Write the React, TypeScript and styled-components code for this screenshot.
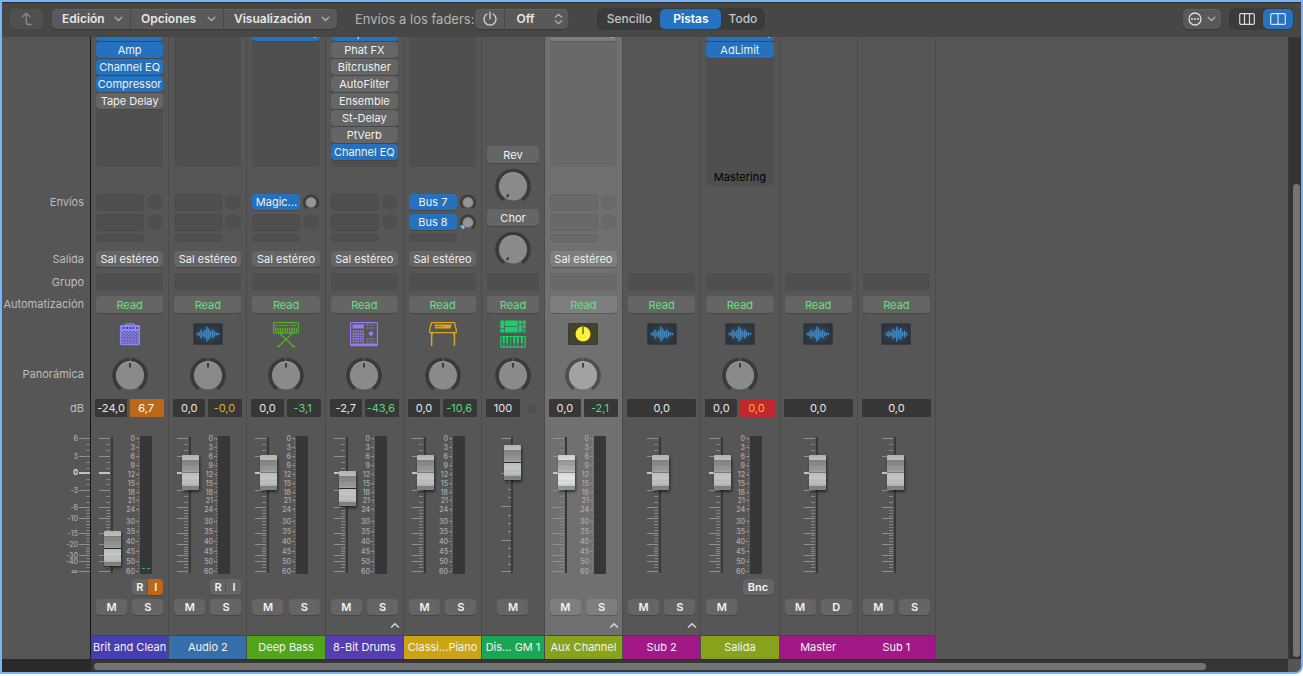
import React from 'react';
import styled, { createGlobalStyle, css } from 'styled-components';

const GlobalStyle = createGlobalStyle`
  * { box-sizing: border-box; }
  body {
    margin: 0;
    background: #fff;
    font-family: Inter, 'Liberation Sans', sans-serif;
    font-size: 11px;
    color: #e6e6e6;
    -webkit-font-smoothing: antialiased;
  }
  button, input, select { font: inherit; color: inherit; margin: 0; }
`;

/* ---------- window and toolbar ---------- */

const Window = styled.div`
  border: 2px solid #78b4fa;
  border-radius: 0 0 8px 0;
  background: #565656;
  overflow: hidden;
`;

const Toolbar = styled.header`
  display: flex;
  align-items: center;
  height: 35px;
  padding: 0 7px 2px 8px;
  background: #474746;
  border-top: 1px solid #2c2c2c;
`;

const raised = css`
  background: #595959;
  box-shadow: 0 1px 1px #3a3a3a, inset 0 1px 0 #626262;
`;

const UpButton = styled.button`
  display: flex;
  align-items: center;
  justify-content: center;
  width: 33px;
  height: 20px;
  padding: 0;
  border: 0;
  border-radius: 5px;
  background: #505050;
  color: #8a8a8a;
`;

const MenuGroup = styled.div`
  display: flex;
  height: 20px;
  margin-left: 9px;
  border-radius: 5px;
  overflow: hidden;
  ${raised}
`;

const MenuButton = styled.button<{ $width: number }>`
  display: flex;
  align-items: center;
  justify-content: space-between;
  width: ${p => p.$width}px;
  padding: 0 7px 0 10px;
  border: 0;
  border-right: 1px solid #484848;
  background: transparent;
  font-size: 12px;
  line-height: 20px;
  font-weight: 600;
  white-space: nowrap;
  &:last-child { border-right: 0; }
`;

const FaderLabel = styled.label`
  margin: 0 1px 0 18px;
  font-size: 13px;
  line-height: 20px;
  color: #b4b4b4;
  white-space: nowrap;
`;

const SendGroup = styled.div`
  display: flex;
  height: 20px;
  border-radius: 5px;
  overflow: hidden;
  ${raised}
`;

const PowerButton = styled.button`
  display: flex;
  align-items: center;
  justify-content: center;
  width: 30px;
  padding: 0;
  border: 0;
  border-right: 1px solid #484848;
  background: transparent;
`;

const SelectBox = styled.span`
  position: relative;
  display: flex;
  width: 63px;
  svg {
    position: absolute;
    right: 5px;
    top: 4px;
    pointer-events: none;
  }
`;

const Select = styled.select`
  width: 100%;
  padding: 0 0 0 11px;
  border: 0;
  appearance: none;
  background: transparent;
  font-size: 12px;
  line-height: 20px;
  font-weight: 600;
`;

const Segments = styled.div`
  display: flex;
  height: 22px;
  padding: 1px;
  margin-left: 29px;
  border-radius: 6px;
  background: #3b3b3b;
`;

const Segment = styled.button<{ $on?: boolean; $width: number }>`
  display: flex;
  align-items: center;
  justify-content: center;
  width: ${p => p.$width}px;
  padding: 0;
  border: 0;
  border-radius: 5px;
  background: ${p => (p.$on ? '#2671c0' : 'transparent')};
  color: ${p => (p.$on ? '#fff' : '#c4c4c4')};
  font-size: 12px;
  line-height: 20px;
  font-weight: ${p => (p.$on ? 600 : 500)};
`;

const ToolbarEnd = styled.div`
  display: flex;
  align-items: center;
  margin-left: auto;
  ${Segments} { margin-left: 8px; }
`;

const ActionButton = styled.button`
  display: flex;
  align-items: center;
  justify-content: center;
  gap: 5px;
  width: 38px;
  height: 20px;
  padding: 0;
  border: 0;
  border-radius: 5px;
  ${raised}
`;

/* ---------- mixer ---------- */

const MixerRow = styled.main`
  display: flex;
`;

const LabelColumn = styled.div`
  width: 89px;
  flex: none;
  display: flex;
  flex-direction: column;
  align-items: flex-end;
  padding-top: 157px;
  border-right: 1px solid #161616;
  color: #bdbdbd;
`;

const RowLabel = styled.span<{ $height: number; $after: number }>`
  height: ${p => p.$height}px;
  line-height: ${p => p.$height}px;
  margin: 0 6px ${p => p.$after}px 0;
  white-space: nowrap;
`;

const Strips = styled.div`
  display: grid;
  grid-template-columns: repeat(5, 5fr) 4fr repeat(5, 5fr);
  width: 845px;
  flex: none;
`;

const StripBox = styled.section<{ $selected?: boolean }>`
  --slot: ${p => (p.$selected ? '#696969' : '#4f4f4f')};
  --button: ${p => (p.$selected ? '#7e7e7e' : '#656565')};
  --edge: ${p => (p.$selected ? '#5a5a5a' : '#474747')};
  --ring: ${p => (p.$selected ? '#4e4e4e' : '#3a3a3a')};
  --cap: ${p => (p.$selected ? '#a2a2a2' : '#8a8a8a')};
  display: flex;
  flex-direction: column;
  min-width: 0;
  border-right: 1px solid #4b4b4b;
  background: ${p => (p.$selected ? '#707070' : '#565656')};
`;

const TopArea = styled.div`
  display: flex;
  flex-direction: column;
  height: 236px;
  padding: 0 5px;
`;

const Inserts = styled.div<{ $tall?: boolean }>`
  display: flex;
  flex-direction: column;
  flex: none;
  height: ${p => (p.$tall ? 149 : 130)}px;
  border-radius: 0 0 4px 4px;
  overflow: hidden;
  background: var(--slot);
`;

const InsertList = styled.div`
  display: flex;
  flex-direction: column;
  gap: 1px;
  margin-top: -12px;
`;

const SlotButton = styled.button<{ $on?: boolean; $green?: boolean; $height?: number }>`
  display: block;
  width: 100%;
  flex: none;
  height: ${p => p.$height ?? 16}px;
  padding: 0;
  border: 0;
  border-radius: 4px;
  background: ${p => (p.$on ? '#2671bd' : 'var(--button)')};
  box-shadow: 0 1px 0 var(--edge);
  color: ${p => (p.$green ? '#67e07e' : '#f0f0f0')};
  line-height: 16px;
  text-align: center;
  white-space: nowrap;
  overflow: hidden;
`;

const MasteringNote = styled.div`
  margin-top: auto;
  line-height: 18px;
  text-align: center;
  color: #000;
`;

const Sends = styled.div`
  display: grid;
  grid-template-columns: 48px 16px;
  grid-template-rows: 17px 17px 8px;
  gap: 3px;
  margin-top: 27px;
  margin-bottom: 9px;
`;

const EmptySend = styled.span`
  border-radius: 4px;
  background: var(--slot);
  box-shadow: inset 0 0 0 1px rgba(0, 0, 0, 0.04);
`;

const EmptyKnob = styled.span<{ $size?: number }>`
  width: ${p => p.$size ?? 16}px;
  height: ${p => p.$size ?? 16}px;
  border-radius: 50%;
  background: var(--slot);
`;

const SmartControls = styled.div`
  display: flex;
  flex-direction: column;
  align-items: center;
  gap: 5px;
  padding-top: 109px;
`;

const Group = styled.div`
  height: 18px;
  margin: 0 5px 5px;
  border-radius: 2px;
  background: var(--slot);
`;

const AutomationRow = styled.div`
  padding: 0 5px;
`;

const IconArea = styled.div`
  display: flex;
  align-items: center;
  justify-content: center;
  height: 44px;
  padding-bottom: 2px;
`;

const PanArea = styled.div`
  display: flex;
  justify-content: center;
  height: 36px;
  margin-bottom: 6px;
`;

const KnobBox = styled.label`
  position: relative;
  display: flex;
  flex: none;
  input {
    position: absolute;
    inset: 0;
    width: 100%;
    height: 100%;
    opacity: 0;
  }
`;

const LevelRow = styled.div`
  display: flex;
  align-items: center;
  gap: 3px;
  height: 18px;
  margin: 0 4px 19px;
`;

const LevelInput = styled.input`
  flex: 1 1 0;
  min-width: 0;
  height: 18px;
  padding: 0;
  border: 0;
  border-radius: 1px;
  background: #373737;
  text-align: center;
`;

const tones = {
  green: ['#373737', '#57d977'],
  yellow: ['#373737', '#d9b32b'],
  orange: ['#bd6818', '#ffffff'],
  red: ['#c1272d', '#ffb629'],
};

const PeakButton = styled.button<{ $tone: keyof typeof tones }>`
  flex: 1 1 0;
  min-width: 0;
  height: 18px;
  padding: 0 2px 0 0;
  border: 0;
  border-radius: 1px;
  background: ${p => tones[p.$tone][0]};
  color: ${p => tones[p.$tone][1]};
  text-align: center;
  white-space: nowrap;
`;

const ClipDot = styled.span`
  display: flex;
  justify-content: center;
  width: 17px;
`;

const FaderArea = styled.div<{ $shift: number }>`
  position: relative;
  height: 138px;
  margin-bottom: 5px;
  padding-left: ${p => p.$shift}px;
`;

const Fader = styled.input<{ $shift: number; $selected?: boolean; $zero?: boolean }>`
  position: absolute;
  left: ${p => p.$shift + 13}px;
  top: -15px;
  width: 17px;
  height: 169px;
  padding: 0;
  appearance: none;
  background: transparent;
  writing-mode: vertical-lr;
  direction: rtl;
  &::-webkit-slider-runnable-track { background: transparent; width: 17px; }
  &::-webkit-slider-thumb {
    appearance: none;
    width: 17px;
    height: 35px;
    border-radius: 1px;
    box-shadow: 1px 2px 3px rgba(0, 0, 0, 0.55);
    filter: ${p => (p.$selected ? 'brightness(1.15)' : 'none')};
    background: linear-gradient(
      to bottom,
      #b2b2b2 0, #bdbdbd 5px,
      #7b7b7b 5px, #8a8a8a 8px, #848484 9px, #959595 12px, #8e8e8e 13px, #a2a2a2 17px,
      ${p => (p.$zero ? '#7a7a7a' : '#2b2b2b')} 17px, ${p => (p.$zero ? '#7a7a7a' : '#2b2b2b')} 18px,
      #b8bcbc 18px, #c2c8c8 24px, #b4b9b9 25px, #bcc2c2 28px, #a8acac 31px,
      #7c7c7c 31px, #858585 35px
    );
  }
`;

const RecordRow = styled.div`
  display: flex;
  justify-content: flex-end;
  gap: 1px;
  height: 16px;
  margin: 0 5px 4px;
`;

const MuteRow = styled.div<{ $center?: boolean }>`
  display: flex;
  justify-content: ${p => (p.$center ? 'center' : 'space-between')};
  height: 16px;
  margin: 0 5px;
`;

const SmallButton = styled.button<{ $half?: 'left' | 'right'; $armed?: boolean }>`
  width: ${p => (p.$half ? 15 : 31)}px;
  height: 16px;
  padding: 0;
  border: 0;
  border-radius: ${p => (p.$half === 'left' ? '4px 0 0 4px' : p.$half === 'right' ? '0 4px 4px 0' : '4px')};
  background: ${p => (p.$armed ? '#bd6818' : 'var(--button)')};
  box-shadow: 0 1px 0 var(--edge);
  color: #f2f2f2;
  font-size: 11px;
  line-height: 16px;
  font-weight: 600;
`;

const StackRow = styled.div`
  display: flex;
  justify-content: flex-end;
  align-items: center;
  height: 20px;
  padding-right: 3px;
`;

const NameLabel = styled.div<{ $color: string }>`
  height: 24px;
  border-top: 1px solid #444;
  background: ${p => p.$color};
  color: #f4f4f4;
  line-height: 22px;
  text-align: center;
  white-space: nowrap;
`;

const Spacer = styled.div`
  flex: 1;
`;

const VerticalScroll = styled.div`
  display: flex;
  width: 13px;
  padding: 147px 1px 2px 4px;
  background: #343434;
  border-left: 1px solid #3a3a3a;
`;

const Thumb = styled.span`
  flex: 1;
  border-radius: 4px;
  background: #747474;
`;

const BottomBar = styled.footer`
  display: flex;
  height: 13px;
`;

const BottomCorner = styled.div<{ $width: number; $color: string }>`
  width: ${p => p.$width}px;
  background: ${p => p.$color};
`;

const HorizontalScroll = styled.div`
  flex: 1;
  display: flex;
  padding: 3px 82px 2px 3px;
  background: #363636;
  border-top: 1px solid #2c2c2c;
`;

/* ---------- drawings ---------- */

const Chevron = () => (
  <svg width="9" height="6" viewBox="0 0 9 6" fill="none" stroke="#a8a8a8" strokeWidth="1.5" strokeLinecap="round" strokeLinejoin="round">
    <path d="M1.2 1.2 4.5 4.5 7.8 1.2" />
  </svg>
);

const Wave = ({ bars }: { bars: number[] }) => (
  <svg width="30" height="22" viewBox="0 0 30 22">
    <defs>
      <radialGradient id="waveBg">
        <stop offset="0" stopColor="#384c61" />
        <stop offset="1" stopColor="#2b343e" />
      </radialGradient>
    </defs>
    <rect x="0.5" y="0.5" width="29" height="21" rx="1" fill="url(#waveBg)" stroke="#383c40" />
    {bars.map((h, i) => (
      <rect key={i} x={3.5 + i * 1.95} y={11 - h / 2} width="1.3" height={h} rx="0.6" fill="#4593d2" />
    ))}
  </svg>
);

const Amp = () => (
  <svg width="22" height="23" viewBox="0 0 22 23" fill="none" stroke="#8d86f8">
    <defs>
      <pattern id="grille" width="3" height="3" patternUnits="userSpaceOnUse">
        <rect width="3" height="3" fill="#8d86f8" stroke="none" />
        <circle cx="0.8" cy="0.8" r="0.75" fill="#4d4b6b" stroke="none" />
        <circle cx="2.3" cy="2.3" r="0.75" fill="#4d4b6b" stroke="none" />
      </pattern>
    </defs>
    <path d="M6 2.5C6.5 1.2 7 .8 8 .8h6c1 0 1.5.4 2 1.7" strokeWidth="1.3" />
    <rect x="1" y="2" width="20" height="6" rx="1" fill="#8d86f8" stroke="none" />
    <g fill="#3f3d66" stroke="none">
      <circle cx="4.5" cy="5" r="1" /><circle cx="8" cy="5" r="1" /><circle cx="11" cy="5" r="1" />
      <circle cx="14" cy="5" r="1" /><circle cx="18" cy="5" r="1" />
    </g>
    <rect x="1.6" y="7.6" width="18.8" height="14" rx="1" fill="url(#grille)" strokeWidth="1.3" />
  </svg>
);

const Synth = () => (
  <svg width="26" height="27" viewBox="0 0 26 27" fill="none" stroke="#55b02a">
    <rect x="0.6" y="1.6" width="24.8" height="10.2" rx="0.5" strokeWidth="1.2" />
    <path d="M2 4.5h3M6 4.5h9M17 4.5h7" strokeWidth="1.6" strokeDasharray="1.6 0.7" />
    <path d="M2 8.8h22" strokeWidth="4" strokeDasharray="1.4 0.9" />
    <path d="M5 11.8h4M17 11.8h4" strokeWidth="1.6" />
    <path d="M7 12.5 20.5 25.5M19 12.5 5.5 25.5" strokeWidth="1.2" />
    <path d="M4 26.2 7 24.5M22 26.2 19 24.5" strokeWidth="1.4" />
  </svg>
);

const DrumMachine = () => (
  <svg width="28" height="25" viewBox="0 0 28 25" fill="none" stroke="#9a78f2">
    <rect x="0.6" y="0.6" width="26.8" height="23" rx="0.8" strokeWidth="1.2" />
    <path d="M.6 22.7h26.800" strokeWidth="2.4" />
    <rect x="2.5" y="2.5" width="11.5" height="4" fill="#9a78f2" stroke="none" />
    <path d="M2.5 9.3h11.500M2.500 11.800h11.500M2.500 14.300h11.500M2.500 16.800h11.500M2.500 19.300h11.500" strokeWidth="1.8" strokeDasharray="1.8 0.6" />
    <path d="M16.5 3h9M16.5 6h9M16.5 17h9M16.5 19.800h9" strokeWidth="1" strokeDasharray="1.5 0.8" />
    <circle cx="21" cy="11.5" r="2.2" fill="#9a78f2" stroke="none" />
  </svg>
);

const ElectricPiano = () => (
  <svg width="28" height="25" viewBox="0 0 28 25" fill="none" stroke="#d9a51a">
    <path d="M2.5.7h23L27.3 8v2.600H.7V8z" strokeWidth="1.3" strokeLinejoin="round" />
    <path d="M5.5 2.5h17l-.8 4H6.300z" fill="#d9a51a" stroke="none" />
    <path d="M7.5 4.5h1.200M9.500 4.500h1.200M12 4.500h1.200" stroke="#5a4a1c" />
    <path d="M2.6 11v13M25.4 11v13" strokeWidth="1.5" />
    <path d="M3.5 10.8c0 1.500-.3 2.200-.9 3M24.500 10.800c0 1.500.3 2.200.9 3" />
  </svg>
);

const SoundModule = () => (
  <svg width="26" height="28" viewBox="0 0 26 28" fill="none" stroke="#17cf6b">
    <g fill="#17cf6b" stroke="none">
      <rect x="0.3" y="0.5" width="4" height="8" /><rect x="5" y="0.5" width="12.8" height="5.5" />
      <rect x="5" y="6.8" width="12.8" height="5.7" /><rect x="0.3" y="9.2" width="4" height="3.3" />
      <rect x="18.6" y="0.5" width="3.3" height="3.5" /><rect x="22.6" y="0.5" width="3.1" height="3.5" />
      <rect x="18.6" y="4.7" width="3.3" height="7.8" /><rect x="22.6" y="4.7" width="3.1" height="3.5" />
      <rect x="22.6" y="9" width="3.1" height="1.4" /><rect x="22.6" y="11.2" width="3.1" height="1.3" />
    </g>
    <rect x="0.8" y="16.5" width="24.4" height="10.7" rx="0.5" strokeWidth="1.2" />
    <path d="M3.8 17v10M7.2 17v10M10.7 17v10M14.2 17v10M17.7 17v10M21.8 17v10" strokeWidth="0.9" />
    <path d="M3.8 17v6M7.2 17v6M14.2 17v6M17.7 17v6M21.8 17v6" strokeWidth="1.9" />
  </svg>
);

const AuxKnob = () => (
  <svg width="30" height="22" viewBox="0 0 30 22">
    <rect x="0.5" y="0.5" width="29" height="21" rx="1" fill="#45432c" stroke="#3c3b30" />
    <circle cx="15" cy="11" r="7.5" fill="#fbf13c" />
    <path d="M15 4v7" stroke="#4a4720" strokeWidth="1.2" />
  </svg>
);

const WAVE_WIDE = [2, 4, 9, 5, 8, 15, 11, 6, 9, 5, 3, 2];
const WAVE_FINE = [1, 4, 6, 4, 10, 7, 15, 9, 12, 5, 7, 3];

function StripIcon({ kind }: { kind: string }) {
  switch (kind) {
    case 'amp': return <Amp />;
    case 'synth': return <Synth />;
    case 'drums': return <DrumMachine />;
    case 'piano': return <ElectricPiano />;
    case 'module': return <SoundModule />;
    case 'aux': return <AuxKnob />;
    case 'waveFine': return <Wave bars={WAVE_FINE} />;
    default: return <Wave bars={WAVE_WIDE} />;
  }
}

function Knob({ label, low }: { label: string; low?: boolean }) {
  return (
    <KnobBox>
      <svg width="36" height="36" viewBox="0 0 36 36" fill="none">
        <path d="M8.9 31.7A16 16 0 1 1 27.1 31.7" stroke="var(--ring)" strokeWidth="3.6" />
        {!low && <path d="M18 1v5" stroke="#3f8a4d" />}
        <circle cx="18" cy="18.5" r="14" fill="var(--cap)" />
        <path d="M7.5 9.5A13.5 13.5 0 0 1 28.5 9.5" stroke="rgba(255,255,255,.35)" strokeWidth="0.8" />
        {low
          ? <path d="M13.5 26.5 11.8 29" stroke="#222" strokeWidth="1.5" />
          : <path d="M18 6v4.5" stroke="#222" strokeWidth="1.5" />}
      </svg>
      <input type="range" min="-64" max="63" defaultValue={low ? -64 : 0} aria-label={label} />
    </KnobBox>
  );
}

function SendKnob({ label, low }: { label: string; low?: boolean }) {
  return (
    <KnobBox>
      <svg width="16" height="17" viewBox="0 0 16 17" fill="none">
        <path d="M4 14.3A7 7 0 1 1 12 14.3" stroke="#3a3a3a" strokeWidth="2" />
        {low && <path d="M1.3 11.5 4.2 14.3" stroke="#7cb9ff" strokeWidth="3" />}
        <circle cx="8" cy="8.5" r="5" fill="#959595" />
      </svg>
      <input type="range" min="0" max="127" defaultValue={low ? 0 : 90} aria-label={label} />
    </KnobBox>
  );
}

const MAJOR = [2, 20, 54, 71, 82, 97, 108, 119, 125, 135];
const MINOR = [8, 14, 26, 32, 43, 48, 60, 66, 74, 77, 80, 85, 88, 91, 94, 99, 102, 105, 111, 113, 115, 117, 122, 128, 131];

function FaderTicks({ x, end, minor }: { x: number; end: number; minor: number }) {
  return (
    <g shapeRendering="crispEdges" stroke="#909090">
      {MAJOR.map(y => <path key={y} d={`M${x} ${y + 0.5}H${end}`} />)}
      {MINOR.map(y => <path key={y} d={`M${minor} ${y + 0.5}H${end}`} stroke="#858585" />)}
      <path d={`M${x} 37H${end}`} stroke="#c4c4c4" strokeWidth="2" />
    </g>
  );
}

const METER_SCALE: [string, number][] = [
  ['0', 2], ['3', 11], ['6', 20], ['9', 29], ['12', 38], ['15', 47], ['18', 56], ['21', 64],
  ['24', 73], ['30', 85], ['35', 95], ['40', 105], ['45', 115], ['50', 125], ['60', 135],
];

const ScaleSvg = styled.svg`
  display: block;
  overflow: visible;
`;

const ScaleText = styled.text`
  font-size: 7px;
  font-weight: 500;
  fill: #acacac;
  text-anchor: end;
`;

function FaderScale({ meter, level }: { meter?: boolean; level?: boolean }) {
  return (
    <ScaleSvg width="62" height="138" viewBox="0 0 62 138">
      <FaderTicks x={8} end={19} minor={15} />
      <rect x="20" y="1" width="2" height="136" fill="#383838" />
      {meter && (
        <>
          {METER_SCALE.map(([t, y]) => <ScaleText key={t} x="44" y={y + 3}>{t}</ScaleText>)}
          {METER_SCALE.map(([t, y]) => <path key={t} d={`M45 ${y + 0.5}h3`} stroke="#8e8e8e" shapeRendering="crispEdges" />)}
          <path d="M47.5 2.5v133" stroke="#8a8a8a" strokeDasharray="1 2" shapeRendering="crispEdges" />
          <rect x="49" y="0" width="12" height="138" rx="1" fill="#373737" />
          {level && <path d="M51 132.5h3M56 132.5h3" stroke="#3fae55" strokeWidth="1" />}
        </>
      )}
    </ScaleSvg>
  );
}

function MidiScale() {
  const majors = [2, 37, 70, 104, 135];
  const minors = [10, 19, 28, 45, 53, 61, 79, 87, 95, 112, 120, 128];
  return (
    <ScaleSvg width="50" height="138" viewBox="0 0 50 138">
      <g shapeRendering="crispEdges" stroke="#909090">
        {majors.map(y => <path key={y} d={`M8 ${y + 0.5}h11`} />)}
        {minors.map(y => <path key={y} d={`M15 ${y + 0.5}h4`} />)}
      </g>
      <rect x="18" y="1" width="2" height="136" fill="#383838" />
    </ScaleSvg>
  );
}

const RULER: [string, number][] = [
  ['6', 2], ['3', 20], ['-3', 54], ['-6', 71], ['-10', 82], ['-15', 97], ['-20', 108], ['-30', 119], ['-40', 125], ['∞', 135],
];

const ZeroText = styled(ScaleText)`
  fill: #e2e2e2;
  font-weight: 700;
`;

const Ruler = () => (
  <ScaleSvg width="88" height="138" viewBox="0 0 88 138">
    {RULER.map(([t, y]) => <ScaleText key={t} x="76" y={y + 3}>{t}</ScaleText>)}
    <ZeroText x="76" y="39">0</ZeroText>
    <FaderTicks x={77} end={88} minor={84} />
  </ScaleSvg>
);

/* ---------- data ---------- */

type Insert = [name: string, on: boolean];

interface Strip {
  name: string;
  color: string;
  icon: string;
  inserts?: Insert[];
  mastering?: boolean;
  sends?: string[];
  lowSend?: number;
  midi?: boolean;
  selected?: boolean;
  pan?: boolean;
  level: string;
  peak?: string;
  tone?: keyof typeof tones;
  fader: number;
  record?: 'armed' | 'idle';
  bounce?: boolean;
  buttons: string[];
  stack?: boolean;
}

const STRIPS: Strip[] = [
  { name: 'Brit and Clean', color: '#463fb3', icon: 'amp', inserts: [['Noise Gate', true], ['Amp', true], ['Channel EQ', true], ['Compressor', true], ['Tape Delay', false]], sends: [], pan: true, level: '-24,0', peak: '6,7', tone: 'orange', fader: 24, record: 'armed', buttons: ['M', 'S'] },
  { name: 'Audio 2', color: '#376fab', icon: 'wave', inserts: [], sends: [], pan: true, level: '0,0', peak: '-0,0', tone: 'yellow', fader: 100, record: 'idle', buttons: ['M', 'S'] },
  { name: 'Deep Bass', color: '#52a41b', icon: 'synth', inserts: [['Channel EQ', true]], sends: ['Magic...'], pan: true, level: '0,0', peak: '-3,1', tone: 'green', fader: 100, buttons: ['M', 'S'] },
  { name: '8-Bit Drums', color: '#563eb1', icon: 'drums', inserts: [['Compressor', true], ['Phat FX', false], ['Bitcrusher', false], ['AutoFilter', false], ['Ensemble', false], ['St-Delay', false], ['PtVerb', false], ['Channel EQ', true]], sends: [], pan: true, level: '-2,7', peak: '-43,6', tone: 'green', fader: 84, buttons: ['M', 'S'], stack: true },
  { name: 'Classi...Piano', color: '#caa414', icon: 'piano', inserts: [], sends: ['Bus 7', 'Bus 8'], lowSend: 1, pan: true, level: '0,0', peak: '-10,6', tone: 'green', fader: 100, buttons: ['M', 'S'] },
  { name: 'Dis... GM 1', color: '#1ba656', icon: 'module', midi: true, pan: true, level: '100', fader: 110, buttons: ['M'] },
  { name: 'Aux Channel', color: '#88a31b', icon: 'aux', inserts: [['Channel EQ', false]], sends: [], selected: true, pan: true, level: '0,0', peak: '-2,1', tone: 'green', fader: 100, buttons: ['M', 'S'], stack: true },
  { name: 'Sub 2', color: '#a31887', icon: 'wave', level: '0,0', fader: 100, buttons: ['M', 'S'], stack: true },
  { name: 'Salida', color: '#88a31b', icon: 'wave', inserts: [['Channel EQ', true], ['AdLimit', true]], mastering: true, pan: true, level: '0,0', peak: '0,0', tone: 'red', fader: 100, bounce: true, buttons: ['M'] },
  { name: 'Master', color: '#a31887', icon: 'wave', level: '0,0', fader: 100, buttons: ['M', 'D'] },
  { name: 'Sub 1', color: '#a31887', icon: 'waveFine', level: '0,0', fader: 100, buttons: ['M', 'S'] },
];

function SendRows({ strip }: { strip: Strip }) {
  return (
    <Sends>
      {[0, 1].map(i => {
        const bus = strip.sends?.[i];
        return (
          <React.Fragment key={i}>
            {bus ? <SlotButton $on>{bus}</SlotButton> : <EmptySend />}
            {bus ? <SendKnob label={`${strip.name} ${bus}`} low={strip.lowSend === i} /> : <EmptyKnob />}
          </React.Fragment>
        );
      })}
      <EmptySend />
    </Sends>
  );
}

function ChannelStrip({ strip }: { strip: Strip }) {
  const metered = Boolean(strip.peak);
  const shift = metered ? 0 : strip.midi ? 11 : 16;
  return (
    <StripBox $selected={strip.selected} aria-label={strip.name}>
      <TopArea>
        {strip.inserts && (
          <Inserts $tall={strip.mastering}>
            <InsertList>
              {strip.inserts.map(([name, on]) => <SlotButton key={name} $on={on}>{name}</SlotButton>)}
            </InsertList>
            {strip.mastering && <MasteringNote>Mastering</MasteringNote>}
          </Inserts>
        )}
        {strip.sends && <SendRows strip={strip} />}
        {strip.sends && <SlotButton>Sal estéreo</SlotButton>}
        {strip.midi && (
          <SmartControls>
            <SlotButton $height={17}>Rev</SlotButton>
            <Knob label="Rev" low />
            <SlotButton $height={17}>Chor</SlotButton>
            <Knob label="Chor" low />
          </SmartControls>
        )}
      </TopArea>
      <Group />
      <AutomationRow><SlotButton $green $height={17}>Read</SlotButton></AutomationRow>
      <IconArea><StripIcon kind={strip.icon} /></IconArea>
      <PanArea>{strip.pan && <Knob label={`Panorámica ${strip.name}`} />}</PanArea>
      <LevelRow>
        <LevelInput defaultValue={strip.level} aria-label={`dB ${strip.name}`} />
        {strip.peak && <PeakButton $tone={strip.tone ?? 'green'}>{strip.peak}</PeakButton>}
        {strip.midi && <ClipDot><EmptyKnob $size={9} /></ClipDot>}
      </LevelRow>
      <FaderArea $shift={shift}>
        {strip.midi ? <MidiScale /> : <FaderScale meter={metered} level={strip.record === 'armed'} />}
        <Fader
          type="range"
          min="0"
          max="134"
          defaultValue={strip.fader}
          aria-label={`Fader ${strip.name}`}
          $shift={strip.midi ? shift - 2 : shift}
          $selected={strip.selected}
          $zero={strip.fader === 100}
        />
      </FaderArea>
      <RecordRow>
        {strip.record && <SmallButton $half="left">R</SmallButton>}
        {strip.record && <SmallButton $half="right" $armed={strip.record === 'armed'}>I</SmallButton>}
        {strip.bounce && <SmallButton>Bnc</SmallButton>}
      </RecordRow>
      <MuteRow $center={strip.midi}>
        {strip.buttons.map(b => <SmallButton key={b}>{b}</SmallButton>)}
      </MuteRow>
      <StackRow>
        {strip.stack && (
          <svg width="10" height="7" viewBox="0 0 10 7" fill="none" stroke="#d8d8d8" strokeWidth="1.5">
            <path d="M1.2 5.5 5 1.7 8.8 5.5" />
          </svg>
        )}
      </StackRow>
      <NameLabel $color={strip.color}>{strip.name}</NameLabel>
    </StripBox>
  );
}

export default function App() {
  return (
    <>
      <GlobalStyle />
      <Window>
        <Toolbar>
          <UpButton aria-label="Subir">
            <svg width="12" height="14" viewBox="0 0 12 14" fill="none" stroke="currentColor" strokeWidth="1.3" strokeLinecap="round" strokeLinejoin="round">
              <path d="M1.5 4.8 5.2 1.2 8.9 4.8M5.2 1.2V9.5c0 2 .8 3 2.6 3H10" />
            </svg>
          </UpButton>
          <MenuGroup>
            <MenuButton $width={79}>Edición<Chevron /></MenuButton>
            <MenuButton $width={93}>Opciones<Chevron /></MenuButton>
            <MenuButton $width={113}>Visualización<Chevron /></MenuButton>
          </MenuGroup>
          <FaderLabel htmlFor="send-mode">Envíos a los faders:</FaderLabel>
          <SendGroup>
            <PowerButton aria-label="Activar envíos a los faders">
              <svg width="16" height="16" viewBox="0 0 16 16" fill="none" stroke="#d0d0d0" strokeWidth="1.4" strokeLinecap="round">
                <path d="M8 1.3v6.4M4.900 3a6 6 0 1 0 6.200 0" />
              </svg>
            </PowerButton>
            <SelectBox>
              <Select id="send-mode" defaultValue="Off"><option>Off</option></Select>
              <svg width="9" height="12" viewBox="0 0 9 12" fill="none" stroke="#a8a8a8" strokeWidth="1.4" strokeLinecap="round" strokeLinejoin="round">
                <path d="M1.3 4.2 4.5 1.2 7.7 4.2M1.3 7.8 4.5 10.8 7.7 7.8" />
              </svg>
            </SelectBox>
          </SendGroup>
          <Segments role="group" aria-label="Vista">
            <Segment $width={62}>Sencillo</Segment>
            <Segment $width={61} $on aria-pressed>Pistas</Segment>
            <Segment $width={43}>Todo</Segment>
          </Segments>
          <ToolbarEnd>
            <ActionButton aria-label="Acciones">
              <svg width="14" height="14" viewBox="0 0 14 14" fill="none">
                <circle cx="7" cy="7" r="6" stroke="#dedede" strokeWidth="1.3" />
                <circle cx="4" cy="7" r="1" fill="#dedede" /><circle cx="7" cy="7" r="1" fill="#dedede" /><circle cx="10" cy="7" r="1" fill="#dedede" />
              </svg>
              <Chevron />
            </ActionButton>
            <Segments role="group" aria-label="Anchura">
              <Segment $width={33} aria-label="Canales estrechos">
                <svg width="16" height="12" viewBox="0 0 16 12" fill="none" stroke="#dcdcdc" strokeWidth="1.2">
                  <rect x="0.7" y="0.7" width="14.6" height="10.6" rx="1.3" /><path d="M5.5 1v10M10.5 1v10" />
                </svg>
              </Segment>
              <Segment $width={30} $on aria-pressed aria-label="Canales anchos">
                <svg width="16" height="12" viewBox="0 0 16 12" fill="none" stroke="#d6e6f8" strokeWidth="1.2">
                  <rect x="0.7" y="0.7" width="14.6" height="10.6" rx="1.3" /><path d="M8 1v10" />
                </svg>
              </Segment>
            </Segments>
          </ToolbarEnd>
        </Toolbar>
        <MixerRow>
          <LabelColumn>
            <RowLabel $height={17} $after={40}>Envíos</RowLabel>
            <RowLabel $height={16} $after={6}>Salida</RowLabel>
            <RowLabel $height={18} $after={5}>Grupo</RowLabel>
            <RowLabel $height={17} $after={44}>Automatización</RowLabel>
            <RowLabel $height={34} $after={8}>Panorámica</RowLabel>
            <RowLabel $height={18} $after={19}>dB</RowLabel>
            <Ruler />
          </LabelColumn>
          <Strips>
            {STRIPS.map(s => <ChannelStrip key={s.name} strip={s} />)}
          </Strips>
          <Spacer />
          <VerticalScroll aria-hidden><Thumb /></VerticalScroll>
        </MixerRow>
        <BottomBar aria-hidden>
          <BottomCorner $width={89} $color="#2a2a2a" />
          <HorizontalScroll><Thumb /></HorizontalScroll>
          <BottomCorner $width={13} $color="#555" />
        </BottomBar>
      </Window>
    </>
  );
}
